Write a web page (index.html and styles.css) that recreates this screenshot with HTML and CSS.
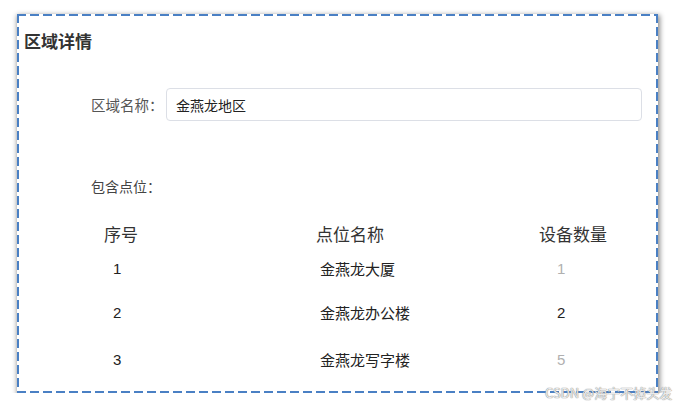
FILE: index.html
```html
<!DOCTYPE html>
<html lang="zh-CN">
<head>
    <meta charset="UTF-8">
    <title>区域详情</title>
    <link rel="stylesheet" href="styles.css">
</head>
<body>

<div class="card">
    <h3 class="card-title">区域详情</h3>

    <div class="section">
        <div class="form-row">
            <label class="form-label" for="areaName">区域名称：</label>
            <input class="form-input" id="areaName" type="text" value="金燕龙地区">
        </div>

        <div class="sub-label">包含点位：</div>

        <div class="point-table">
            <div class="row row-head">
                <div class="cell c-no">序号</div>
                <div class="cell c-name">点位名称</div>
                <div class="cell c-qty">设备数量</div>
            </div>
            <div class="row">
                <div class="cell c-no">1</div>
                <div class="cell c-name">金燕龙大厦</div>
                <div class="cell c-qty muted">1</div>
            </div>
            <div class="row">
                <div class="cell c-no">2</div>
                <div class="cell c-name">金燕龙办公楼</div>
                <div class="cell c-qty">2</div>
            </div>
            <div class="row">
                <div class="cell c-no">3</div>
                <div class="cell c-name">金燕龙写字楼</div>
                <div class="cell c-qty muted">5</div>
            </div>
        </div>
    </div>
</div>

<div class="watermark">CSDN @海宁不掉头发</div>

</body>
</html>
```

FILE: styles.css
```css
body {
    margin: 0;
    padding: 14px 0 0 17px;
    background: #fff;
    font-family: "Noto Sans CJK SC", "Liberation Sans", sans-serif;
    color: #333;
}

.card {
    box-sizing: border-box;
    width: 641px;
    padding: 2px 16px 14px 7px;
    background:
        repeating-linear-gradient(90deg, #4a80c4 0 9px, transparent 9px 13px) top left / 100% 2px no-repeat,
        repeating-linear-gradient(90deg, #4a80c4 0 9px, transparent 9px 13px) bottom left / 100% 2px no-repeat,
        repeating-linear-gradient(180deg, #4a80c4 0 9px, transparent 9px 13px) top left / 2px 100% no-repeat,
        repeating-linear-gradient(180deg, #4a80c4 0 9px, transparent 9px 13px) top right / 2px 100% no-repeat,
        #fff;
    box-shadow: 1px 2px 5px 1px rgba(0, 0, 0, 0.45);
}

.card-title {
    margin: 13px 0 0;
    font-size: 17px;
    line-height: 24px;
    font-weight: 600;
    color: #333;
}

.section {
    padding-left: 67px;
}

.form-row {
    display: flex;
    align-items: center;
    margin-top: 35px;
    height: 33px;
}

.form-label {
    width: 75px;
    font-size: 14.5px;
    color: #555;
}

.form-input {
    flex: 1;
    box-sizing: border-box;
    height: 33px;
    padding: 0 9px;
    border: 1px solid #dcdfe6;
    border-radius: 4px;
    font-family: inherit;
    font-size: 14px;
    color: #222;
    outline: none;
}

.sub-label {
    margin-top: 55px;
    font-size: 14px;
    line-height: 20px;
    color: #444;
}

.point-table {
    margin-top: 19px;
}

.row {
    display: grid;
    grid-template-columns: 209px 220px 1fr;
    align-items: center;
    font-size: 15px;
    color: #222;
}

.row-head {
    height: 36px;
    font-size: 17px;
    color: #333;
}

.row:nth-child(2) { height: 34px; }
.row:nth-child(3) { height: 54px; }
.row:nth-child(4) { height: 40px; }

.c-no { padding-left: 22px; font-family: "Liberation Sans", sans-serif; }
.c-name { padding-left: 20px; }
.c-qty { padding-left: 37px; font-family: "Liberation Sans", sans-serif; }

.row-head .c-no { padding-left: 13px; font-family: inherit; }
.row-head .c-name { padding-left: 16px; }
.row-head .c-qty { padding-left: 19px; font-family: inherit; }

.muted {
    color: #b0b0b0;
}

.watermark {
    position: absolute;
    left: 545px;
    top: 385px;
    font-size: 13px;
    line-height: 16px;
    color: rgba(255, 255, 255, 0.85);
    text-shadow: 0 0 1px #777, 0 0 1px #999;
}
```
